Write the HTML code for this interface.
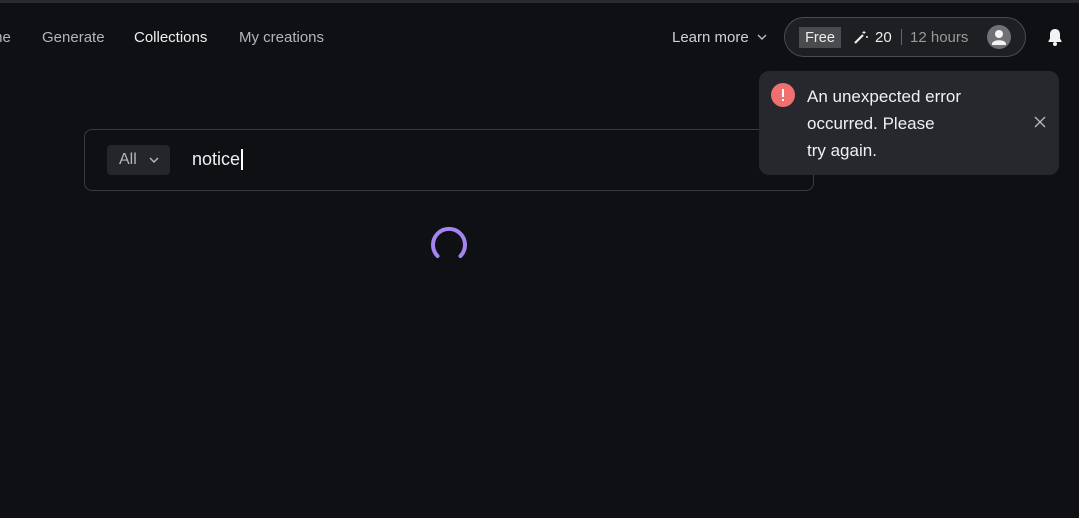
<!DOCTYPE html>
<html><head><style>
body{margin:0;width:1079px;height:518px;background:#0f1014;font-family:"Liberation Sans",sans-serif;position:relative;overflow:hidden;color:#e6e6e8}
.topbar{position:absolute;left:0;top:0;width:1079px;height:3px;background:#2a2b30}
.nav{position:absolute;top:29px;font-size:15px;color:#b4b5ba}
.pill{position:absolute;left:784px;top:17px;width:242px;height:40px;border:1px solid #4a4b50;border-radius:20px;background:#1e1f23;box-sizing:border-box}
.free{position:absolute;left:799px;top:27px;width:42px;height:21px;background:#4a4b4f;color:#eee;font-size:14.5px;line-height:22px;text-align:center}
.search{position:absolute;left:84px;top:129px;width:730px;height:62px;border:1px solid #3a3b40;border-radius:8px;box-sizing:border-box}
.all{position:absolute;left:107px;top:145px;width:63px;height:30px;background:#25262a;border-radius:4px;color:#b4b5ba;font-size:16px;line-height:30px;padding-left:12px;box-sizing:border-box}
.toast{position:absolute;left:759px;top:71px;width:300px;height:104px;background:#27282d;border-radius:10px}
.msg{position:absolute;left:807px;top:83px;font-size:17px;line-height:27px;color:#f0f0f2}
</style></head><body>
<div class="topbar"></div>
<div class="nav" style="left:-10px">me</div>
<div class="nav" style="left:42px">Generate</div>
<div class="nav" style="left:134px;color:#f0f0f2">Collections</div>
<div class="nav" style="left:239px">My creations</div>
<div class="nav" style="left:672px;color:#d0d1d5">Learn more</div>
<svg style="position:absolute;left:756px;top:32px" width="12" height="10"><path d="M2 3l4 4 4-4" stroke="#bbb" stroke-width="1.4" fill="none"/></svg>
<div class="pill"></div>
<div class="free">Free</div>
<svg style="position:absolute;left:853px;top:29px" width="16" height="16"><path d="M2 14L10 6" stroke="#eee" stroke-width="2.2"/><path d="M11 2v3M9.5 3.5h3M14 7v2M13 8h2" stroke="#eee" stroke-width="1"/></svg>
<div class="nav" style="left:875px;color:#eee">20</div>
<div style="position:absolute;left:901px;top:29px;width:1px;height:16px;background:#666"></div>
<div class="nav" style="left:910px;color:#999">12 hours</div>
<svg style="position:absolute;left:987px;top:25px" width="24" height="24"><circle cx="12" cy="12" r="12" fill="#707176"/><circle cx="12" cy="9" r="4" fill="#f3f3f3"/><path d="M5 19c0-5 14-5 14 0v1H5z" fill="#f3f3f3"/></svg>
<svg style="position:absolute;left:1046px;top:27px" width="18" height="20"><path d="M9 2c-3.5 0-5 2.5-5 5.5v4L2.5 14v1h13v-1L14 11.5v-4C14 4.5 12.5 2 9 2z" fill="#f3f3f3"/><circle cx="9" cy="17" r="2" fill="#f3f3f3"/></svg>
<div class="search"></div>
<div class="all">All</div>
<svg style="position:absolute;left:148px;top:155px" width="12" height="10"><path d="M2 3l4 4 4-4" stroke="#bbb" stroke-width="1.4" fill="none"/></svg>
<div style="position:absolute;left:192px;top:149px;font-size:18px;color:#f0f0f2">notice</div>
<div style="position:absolute;left:241px;top:149px;width:1.5px;height:21px;background:#fff"></div>
<svg style="position:absolute;left:429px;top:226px" width="40" height="40"><path d="M8.5 30A16 16 0 1 1 31.5 30" stroke="#a684f0" stroke-width="4" fill="none" stroke-linecap="round"/></svg>
<div class="toast"></div>
<svg style="position:absolute;left:771px;top:83px" width="24" height="24"><circle cx="12" cy="12" r="12" fill="#f07070"/><rect x="11" y="6" width="2" height="8" fill="#fff"/><rect x="11" y="16" width="2" height="2" fill="#fff"/></svg>
<div class="msg">An unexpected error<br>occurred. Please<br>try again.</div>
<svg style="position:absolute;left:1034px;top:116px" width="12" height="12"><path d="M1 1l10 10M11 1L1 11" stroke="#bbb" stroke-width="1.3"/></svg>
</body></html>
